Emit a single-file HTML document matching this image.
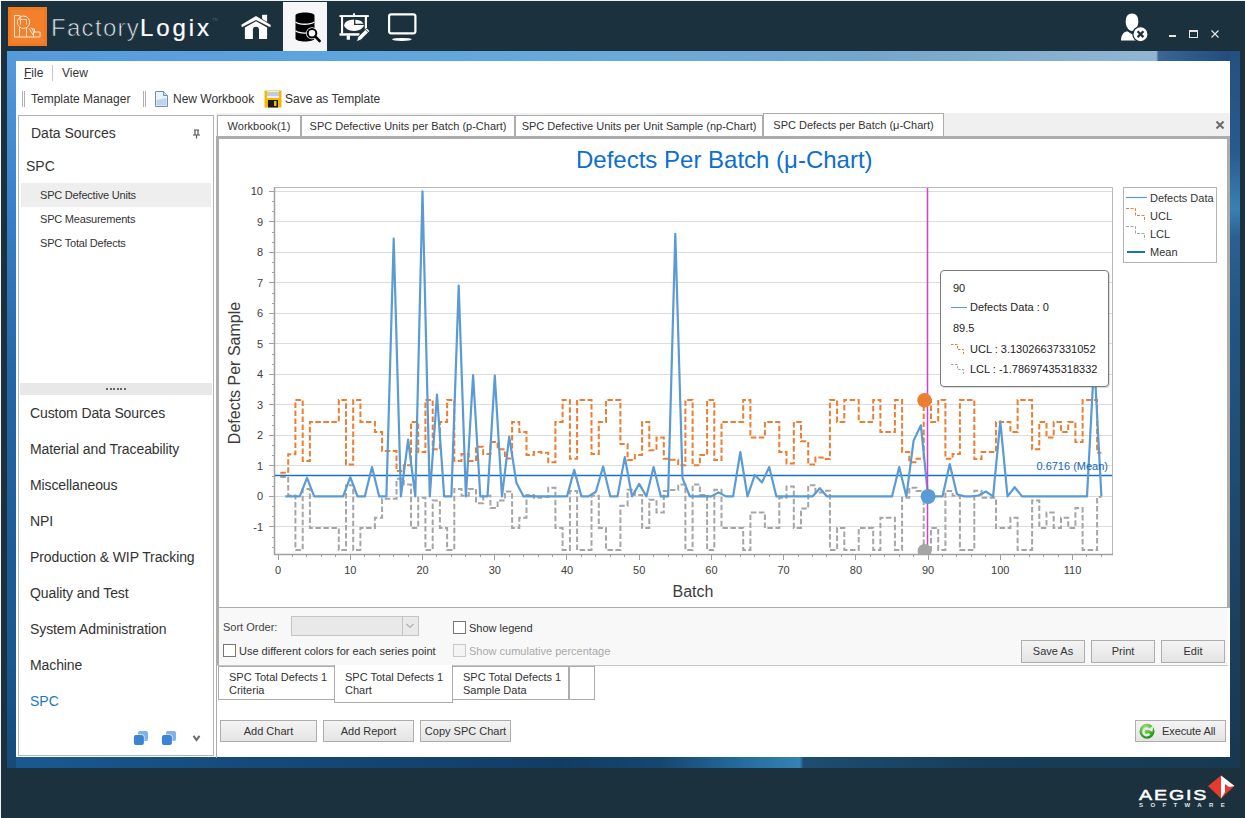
<!DOCTYPE html>
<html><head><meta charset="utf-8"><style>
html,body{margin:0;padding:0;}
body{width:1245px;height:818px;overflow:hidden;position:relative;background:#1b313e;font-family:'Liberation Sans',sans-serif;}
div{font-family:'Liberation Sans',sans-serif;}
</style></head><body>
<div style="position:absolute;left:0;top:0;width:1245px;height:1px;background:#f2f2f2"></div><div style="position:absolute;left:0;top:0;width:1px;height:818px;background:#f2f2f2"></div><div style="position:absolute;left:8px;top:7px;width:39px;height:39px;background:#ef7a1f"></div>
<div style="position:absolute;left:11px;top:10px;width:33px;height:33px;background:#f2802c"></div>
<svg style="position:absolute;left:8px;top:7px" width="39" height="39" viewBox="0 0 39 39">
 <g fill="none" stroke="#fde6d4" stroke-width="1">
  <path d="M12 13 V8.5 H6.5 V30 H32 V25 H25.5 V30"/>
  <path d="M11.5 20 V30 M18.5 21 V30"/>
  <circle cx="15.5" cy="15.2" r="6.2"/>
  <path d="M12.5 17.5 V12.5 H18.5 V17.5" stroke-width="0.9"/>
  <path d="M21 21.5 L25.5 28.5 M23 20.5 L26.5 26 V22 H24"/>
 </g>
</svg><div style="position:absolute;left:51px;top:16px;font-size:24px;color:#e6eaee;letter-spacing:1.3px;line-height:1;-webkit-text-stroke:0.7px #1b313e;transform:scaleX(1.0)">Factory</div><div style="position:absolute;left:140px;top:16px;font-size:24px;color:#ffffff;letter-spacing:2.9px;line-height:1;-webkit-text-stroke:0.2px #fff">Logix</div><div style="position:absolute;left:212px;top:18px;font-size:4px;color:#55636e;line-height:1">TM</div><div style="position:absolute;left:283px;top:2px;width:44px;height:49px;background:#f6f6f8"></div><svg style="position:absolute;left:235px;top:8px" width="45" height="37" viewBox="0 0 45 37">
 <rect x="27.1" y="6.8" width="5" height="7" fill="#fff"/>
 <path d="M5.3 16.8 L21 7.1 L36.8 17.1 L36.3 20.2 L21 11 L5.8 20.2 Z" fill="#1b313e"/>
 <path d="M6.3 16.8 L21 8.1 L35.8 17.1 L35.3 19.2 L21 12.0 L6.8 19.2 Z" fill="#fff"/>
 <path d="M9.9 19.4 L21 13.3 L32.1 19.4 V31 H24 V21.9 A3.05 3.05 0 0 0 17.9 21.9 V31 H9.9 Z" fill="#fff"/>
</svg><svg style="position:absolute;left:294px;top:11px" width="29" height="33" viewBox="0 0 29 33">
 <path d="M1.5 4.5 C1.5 0.5 20.5 0.5 20.5 4.5 V27.5 C20.5 31.5 1.5 31.5 1.5 27.5 Z" fill="#000"/>
 <path d="M1.5 11 C5 14 16 14 20.5 11 M1.5 19.8 C5 22.8 16 22.8 20.5 19.8" fill="none" stroke="#f6f6f8" stroke-width="1.3"/>
 <circle cx="18" cy="22.2" r="6" fill="#f6f6f8"/>
 <circle cx="18" cy="22.2" r="4.3" fill="none" stroke="#000" stroke-width="2"/>
 <path d="M21.2 25.4 L25.6 30" stroke="#000" stroke-width="2.6" stroke-linecap="round"/>
</svg><svg style="position:absolute;left:333px;top:5px" width="90" height="45" viewBox="0 0 90 45">
 <g fill="#fff">
  <rect x="6.5" y="10.1" width="29.3" height="1.9"/>
  <rect x="20" y="8.3" width="2" height="2"/>
  <rect x="8" y="11.9" width="2.1" height="16.5"/>
  <rect x="31.8" y="11.9" width="2.2" height="16.5"/>
  <rect x="6.5" y="28.2" width="20" height="2.5"/>
  <rect x="13.7" y="30.5" width="3.3" height="4.2"/>
  <ellipse cx="21" cy="20.2" rx="9.8" ry="5.8"/>
 </g>
 <path d="M21.7 14 V19.3 H31" fill="none" stroke="#1b313e" stroke-width="1.3"/>
 <path d="M23.5 36.8 L24.8 32 L33.8 23 L36.8 26 L27.8 35 Z" fill="#fff" stroke="#1b313e" stroke-width="0.9"/>
 <path d="M32.3 24.5 L35.3 27.5" stroke="#1b313e" stroke-width="0.7"/>
 <rect x="56.1" y="9.4" width="26.3" height="18.9" rx="2" fill="none" stroke="#fff" stroke-width="2.2"/>
 <ellipse cx="68.9" cy="34.4" rx="9.8" ry="1.5" fill="#fff"/>
</svg><svg style="position:absolute;left:1115px;top:8px" width="40" height="38" viewBox="0 0 40 38">
 <path d="M17 5.6 C21 5.6 23.3 8.5 23.3 13.5 C23.3 19 20 23 17 23 C14 23 10.7 19 10.7 13.5 C10.7 8.5 13 5.6 17 5.6 Z" fill="#fff"/>
 <path d="M6 32.5 C6 27 8.5 24 12.2 23.2 L17 26.2 L20.5 24 L21 32.5 Z" fill="#fff"/>
 <circle cx="25.5" cy="26.2" r="7.6" fill="#fff" stroke="#1b313e" stroke-width="1.3"/>
 <path d="M22.6 23.3 L28.4 29.1 M28.4 23.3 L22.6 29.1" stroke="#1b313e" stroke-width="2.3"/>
</svg><div style="position:absolute;left:1169px;top:35px;width:7px;height:2px;background:#e8e4e0"></div><div style="position:absolute;left:1189px;top:30px;width:7px;height:5px;border:1px solid #e8e4e0;border-top-width:2px"></div><svg style="position:absolute;left:1210px;top:29px" width="10" height="10"><path d="M1.5 1.5 L8.5 8.5 M8.5 1.5 L1.5 8.5" stroke="#e8e4e0" stroke-width="1.2"/></svg><div style="position:absolute;left:7px;top:51px;width:1233px;height:717px;
 background:
  linear-gradient(100deg, rgba(255,255,255,0) 0%, rgba(255,255,255,0) 88%, rgba(20,50,90,0.0) 88%),
  linear-gradient(180deg, #4f93d8 0%, #3f85cc 20%, #2c6fb0 45%, #1f5a93 70%, #174a78 100%)"></div><div style="position:absolute;left:7px;top:51px;width:1233px;height:10px;
 background:linear-gradient(90deg,#559bdc 0%,#5ea6dd 30%,#6aaad8 50%,#74a6cc 70%,#86b0d0 85%,#90b6d2 93.2%,#3a6694 93.4%,#2a5686 97%,#1e4a7b 100%)"></div><div style="position:absolute;left:1230px;top:51px;width:10px;height:717px;
 background:linear-gradient(180deg,#24507f 0%,#285a8c 14%,#3a80b4 22%,#2a6090 26%,#235482 38%,#21507a 50%,#1c4263 75%,#183750 100%)"></div><div style="position:absolute;left:7px;top:757px;width:1233px;height:11px;
 background:linear-gradient(90deg,#1a5a92 0%,#144a7a 20%,#123d63 45%,#15476e 53%,#24689a 59%,#3383b3 64.3%,#1d4d70 64.6%,#163d5a 80%,#173a52 100%)"></div><div style="position:absolute;left:7px;top:51px;width:9px;height:717px;
 background:linear-gradient(180deg,#559bdc 0%,#3b82cc 20%,#2467a8 45%,#1d5c98 70%,#1a5890 85%,#164a78 100%)"></div><div style="position:absolute;left:16px;top:61px;width:1214px;height:696px;background:#fff"></div><div style="position:absolute;left:24px;top:67px;font-size:12px;color:#333;white-space:nowrap;line-height:1;"><u>F</u>ile</div><div style="position:absolute;left:52px;top:65px;width:1px;height:16px;background:#c8c8c8"></div><div style="position:absolute;left:62px;top:67px;font-size:12px;color:#333;white-space:nowrap;line-height:1;">View</div><div style="position:absolute;left:22px;top:91px;width:1px;height:16px;background:#b0b0b0"></div><div style="position:absolute;left:24px;top:91px;width:1px;height:16px;background:#b0b0b0"></div><div style="position:absolute;left:31px;top:93px;font-size:12px;color:#333;white-space:nowrap;line-height:1;">Template Manager</div><div style="position:absolute;left:143px;top:91px;width:1px;height:16px;background:#b0b0b0"></div><div style="position:absolute;left:145px;top:91px;width:1px;height:16px;background:#b0b0b0"></div><svg style="position:absolute;left:154px;top:90px" width="15" height="18" viewBox="0 0 15 18">
 <path d="M1.5 1.5 H9.5 L13.5 5.5 V16.5 H1.5 Z" fill="#eaf2fb" stroke="#6f8fb5" stroke-width="1"/>
 <path d="M9.5 1.5 V5.5 H13.5" fill="#cfe0f3" stroke="#6f8fb5" stroke-width="1"/>
 <path d="M2.5 10 L12.5 8 V15.5 H2.5 Z" fill="#bcd4ee"/>
</svg><div style="position:absolute;left:173px;top:93px;font-size:12px;color:#333;white-space:nowrap;line-height:1;">New Workbook</div><svg style="position:absolute;left:264px;top:90px" width="18" height="18" viewBox="0 0 18 18">
 <rect x="0.5" y="0.5" width="17" height="17" fill="#f5b800"/>
 <rect x="3" y="1" width="12" height="7" fill="#e8eef4"/>
 <rect x="3" y="2.5" width="12" height="1" fill="#9ab"/>
 <rect x="3" y="4.5" width="12" height="1" fill="#9ab"/>
 <rect x="4" y="10" width="10" height="7.5" fill="#1a1a1a"/>
 <rect x="10" y="11" width="2.5" height="5" fill="#f5b800"/>
</svg><div style="position:absolute;left:285px;top:93px;font-size:12px;color:#333;white-space:nowrap;line-height:1;">Save as Template</div><div style="position:absolute;left:18px;top:115px;width:196px;height:641px;border:1px solid #b4b4b4;box-sizing:border-box;background:#fff"></div><div style="position:absolute;left:31px;top:126px;font-size:14px;color:#333;white-space:nowrap;line-height:1;">Data Sources</div><svg style="position:absolute;left:192px;top:129px" width="9" height="10" viewBox="0 0 9 10"><path d="M2 1 H7 M3 1 V6 M6 1 V6 M1 6 H8 M4.5 6 V9.5" stroke="#555" stroke-width="1.2" fill="none"/></svg><div style="position:absolute;left:26px;top:159px;font-size:14px;color:#333;white-space:nowrap;line-height:1;">SPC</div><div style="position:absolute;left:21px;top:183px;width:190px;height:24px;background:#eeeeee"></div><div style="position:absolute;left:40px;top:190px;font-size:11px;color:#333;white-space:nowrap;line-height:1;letter-spacing:-0.2px">SPC Defective Units</div><div style="position:absolute;left:40px;top:214px;font-size:11px;color:#333;white-space:nowrap;line-height:1;letter-spacing:-0.2px">SPC Measurements</div><div style="position:absolute;left:40px;top:238px;font-size:11px;color:#333;white-space:nowrap;line-height:1;letter-spacing:-0.2px">SPC Total Defects</div><div style="position:absolute;left:20px;top:383px;width:192px;height:12px;background:#e8e8e8"></div><div style="position:absolute;left:106.0px;top:388px;width:2px;height:2px;background:#666"></div><div style="position:absolute;left:109.6px;top:388px;width:2px;height:2px;background:#666"></div><div style="position:absolute;left:113.2px;top:388px;width:2px;height:2px;background:#666"></div><div style="position:absolute;left:116.8px;top:388px;width:2px;height:2px;background:#666"></div><div style="position:absolute;left:120.4px;top:388px;width:2px;height:2px;background:#666"></div><div style="position:absolute;left:124.0px;top:388px;width:2px;height:2px;background:#666"></div><div style="position:absolute;left:30px;top:406px;font-size:14px;color:#333;white-space:nowrap;line-height:1;letter-spacing:-0.1px">Custom Data Sources</div><div style="position:absolute;left:30px;top:442px;font-size:14px;color:#333;white-space:nowrap;line-height:1;letter-spacing:-0.1px">Material and Traceability</div><div style="position:absolute;left:30px;top:478px;font-size:14px;color:#333;white-space:nowrap;line-height:1;letter-spacing:-0.1px">Miscellaneous</div><div style="position:absolute;left:30px;top:514px;font-size:14px;color:#333;white-space:nowrap;line-height:1;letter-spacing:-0.1px">NPI</div><div style="position:absolute;left:30px;top:550px;font-size:14px;color:#333;white-space:nowrap;line-height:1;letter-spacing:-0.1px">Production &amp; WIP Tracking</div><div style="position:absolute;left:30px;top:586px;font-size:14px;color:#333;white-space:nowrap;line-height:1;letter-spacing:-0.1px">Quality and Test</div><div style="position:absolute;left:30px;top:622px;font-size:14px;color:#333;white-space:nowrap;line-height:1;letter-spacing:-0.1px">System Administration</div><div style="position:absolute;left:30px;top:658px;font-size:14px;color:#333;white-space:nowrap;line-height:1;letter-spacing:-0.1px">Machine</div><div style="position:absolute;left:30px;top:694px;font-size:14px;color:#1c7ac8;white-space:nowrap;line-height:1;">SPC</div><svg style="position:absolute;left:133px;top:730px" width="16" height="16" viewBox="0 0 16 16">
 <rect x="5" y="0.9" width="10" height="10" rx="2" fill="#7fb3e8"/>
 <rect x="0.4" y="4.5" width="11" height="11" rx="2" fill="#fff"/>
 <rect x="0.9" y="5" width="10" height="10" rx="2" fill="#3d84d0"/>
</svg><svg style="position:absolute;left:161px;top:730px" width="16" height="16" viewBox="0 0 16 16">
 <rect x="5" y="0.9" width="10" height="10" rx="2" fill="#7fb3e8"/>
 <rect x="0.4" y="4.5" width="11" height="11" rx="2" fill="#fff"/>
 <rect x="0.9" y="5" width="10" height="10" rx="2" fill="#3d84d0"/>
</svg><svg style="position:absolute;left:192px;top:734px" width="10" height="9"><path d="M1.5 1.8 L4.5 6 L7.5 1.8" stroke="#6a6a6a" stroke-width="2" fill="none"/></svg><div style="position:absolute;left:216px;top:113px;width:1014px;height:23px;background:#f0f0f0"></div><div style="position:absolute;left:217px;top:115px;width:84px;height:22px;border:1px solid #acacac;border-bottom:none;box-sizing:border-box;background:#fff;font-size:11px;color:#333;text-align:center;line-height:20px;white-space:nowrap">Workbook(1)</div><div style="position:absolute;left:301px;top:115px;width:214px;height:22px;border:1px solid #acacac;border-bottom:none;box-sizing:border-box;background:#fff;font-size:11px;color:#333;text-align:center;line-height:20px;white-space:nowrap">SPC Defective Units per Batch (p-Chart)</div><div style="position:absolute;left:515px;top:115px;width:248px;height:22px;border:1px solid #acacac;border-bottom:none;box-sizing:border-box;background:#fff;font-size:11px;color:#333;text-align:center;line-height:20px;white-space:nowrap">SPC Defective Units per Unit Sample (np-Chart)</div><div style="position:absolute;left:763px;top:113px;width:181px;height:24px;border:1px solid #acacac;border-bottom:none;box-sizing:border-box;background:#fff;font-size:11px;color:#333;text-align:center;line-height:22px;white-space:nowrap">SPC Defects per Batch (μ-Chart)</div><svg style="position:absolute;left:1214px;top:119px" width="12" height="12"><path d="M2.5 2.5 L9.5 9.5 M9.5 2.5 L2.5 9.5" stroke="#6a6a6a" stroke-width="2"/></svg><div style="position:absolute;left:216px;top:136px;width:1014px;height:472px;border-left:3px solid #acacac;border-top:3px solid #acacac;border-right:3px solid #acacac;border-bottom:1px solid #acacac;box-sizing:border-box;background:#fff"></div><div style="position:absolute;left:576px;top:148px;font-size:24px;color:#0d6fcc;white-space:nowrap;line-height:1">Defects Per Batch (μ-Chart)</div><svg width="1245" height="818" style="position:absolute;left:0;top:0">
<line x1="275" y1="526.5" x2="1112" y2="526.5" stroke="#dcdcdc" stroke-width="1"/>
<line x1="275" y1="496.5" x2="1112" y2="496.5" stroke="#dcdcdc" stroke-width="1"/>
<line x1="275" y1="465.5" x2="1112" y2="465.5" stroke="#dcdcdc" stroke-width="1"/>
<line x1="275" y1="435.5" x2="1112" y2="435.5" stroke="#dcdcdc" stroke-width="1"/>
<line x1="275" y1="404.5" x2="1112" y2="404.5" stroke="#dcdcdc" stroke-width="1"/>
<line x1="275" y1="374.5" x2="1112" y2="374.5" stroke="#dcdcdc" stroke-width="1"/>
<line x1="275" y1="343.5" x2="1112" y2="343.5" stroke="#dcdcdc" stroke-width="1"/>
<line x1="275" y1="313.5" x2="1112" y2="313.5" stroke="#dcdcdc" stroke-width="1"/>
<line x1="275" y1="282.5" x2="1112" y2="282.5" stroke="#dcdcdc" stroke-width="1"/>
<line x1="275" y1="252.5" x2="1112" y2="252.5" stroke="#dcdcdc" stroke-width="1"/>
<line x1="275" y1="221.5" x2="1112" y2="221.5" stroke="#dcdcdc" stroke-width="1"/>
<line x1="275" y1="191.5" x2="1112" y2="191.5" stroke="#dcdcdc" stroke-width="1"/>
<line x1="274.5" y1="187.5" x2="1112.5" y2="187.5" stroke="#b9b9b9"/>
<line x1="1112.5" y1="187.5" x2="1112.5" y2="554.5" stroke="#b9b9b9"/>
<line x1="274.5" y1="187" x2="274.5" y2="555" stroke="#a0a0a0" stroke-width="1.5"/>
<line x1="274" y1="554.5" x2="1113" y2="554.5" stroke="#a0a0a0" stroke-width="1.5"/>
<line x1="272" y1="547.5" x2="275" y2="547.5" stroke="#a0a0a0"/>
<line x1="272" y1="537.5" x2="275" y2="537.5" stroke="#a0a0a0"/>
<line x1="269" y1="526.5" x2="275" y2="526.5" stroke="#a0a0a0"/>
<line x1="272" y1="516.5" x2="275" y2="516.5" stroke="#a0a0a0"/>
<line x1="272" y1="506.5" x2="275" y2="506.5" stroke="#a0a0a0"/>
<line x1="269" y1="496.5" x2="275" y2="496.5" stroke="#a0a0a0"/>
<line x1="272" y1="486.5" x2="275" y2="486.5" stroke="#a0a0a0"/>
<line x1="272" y1="476.5" x2="275" y2="476.5" stroke="#a0a0a0"/>
<line x1="269" y1="465.5" x2="275" y2="465.5" stroke="#a0a0a0"/>
<line x1="272" y1="455.5" x2="275" y2="455.5" stroke="#a0a0a0"/>
<line x1="272" y1="445.5" x2="275" y2="445.5" stroke="#a0a0a0"/>
<line x1="269" y1="435.5" x2="275" y2="435.5" stroke="#a0a0a0"/>
<line x1="272" y1="425.5" x2="275" y2="425.5" stroke="#a0a0a0"/>
<line x1="272" y1="415.5" x2="275" y2="415.5" stroke="#a0a0a0"/>
<line x1="269" y1="404.5" x2="275" y2="404.5" stroke="#a0a0a0"/>
<line x1="272" y1="394.5" x2="275" y2="394.5" stroke="#a0a0a0"/>
<line x1="272" y1="384.5" x2="275" y2="384.5" stroke="#a0a0a0"/>
<line x1="269" y1="374.5" x2="275" y2="374.5" stroke="#a0a0a0"/>
<line x1="272" y1="364.5" x2="275" y2="364.5" stroke="#a0a0a0"/>
<line x1="272" y1="354.5" x2="275" y2="354.5" stroke="#a0a0a0"/>
<line x1="269" y1="343.5" x2="275" y2="343.5" stroke="#a0a0a0"/>
<line x1="272" y1="333.5" x2="275" y2="333.5" stroke="#a0a0a0"/>
<line x1="272" y1="323.5" x2="275" y2="323.5" stroke="#a0a0a0"/>
<line x1="269" y1="313.5" x2="275" y2="313.5" stroke="#a0a0a0"/>
<line x1="272" y1="303.5" x2="275" y2="303.5" stroke="#a0a0a0"/>
<line x1="272" y1="293.5" x2="275" y2="293.5" stroke="#a0a0a0"/>
<line x1="269" y1="282.5" x2="275" y2="282.5" stroke="#a0a0a0"/>
<line x1="272" y1="272.5" x2="275" y2="272.5" stroke="#a0a0a0"/>
<line x1="272" y1="262.5" x2="275" y2="262.5" stroke="#a0a0a0"/>
<line x1="269" y1="252.5" x2="275" y2="252.5" stroke="#a0a0a0"/>
<line x1="272" y1="242.5" x2="275" y2="242.5" stroke="#a0a0a0"/>
<line x1="272" y1="232.5" x2="275" y2="232.5" stroke="#a0a0a0"/>
<line x1="269" y1="221.5" x2="275" y2="221.5" stroke="#a0a0a0"/>
<line x1="272" y1="211.5" x2="275" y2="211.5" stroke="#a0a0a0"/>
<line x1="272" y1="201.5" x2="275" y2="201.5" stroke="#a0a0a0"/>
<line x1="269" y1="191.5" x2="275" y2="191.5" stroke="#a0a0a0"/>
<line x1="278.5" y1="554" x2="278.5" y2="560" stroke="#a0a0a0"/>
<line x1="292.5" y1="554" x2="292.5" y2="557" stroke="#a0a0a0"/>
<line x1="306.5" y1="554" x2="306.5" y2="557" stroke="#a0a0a0"/>
<line x1="321.5" y1="554" x2="321.5" y2="557" stroke="#a0a0a0"/>
<line x1="335.5" y1="554" x2="335.5" y2="557" stroke="#a0a0a0"/>
<line x1="350.5" y1="554" x2="350.5" y2="560" stroke="#a0a0a0"/>
<line x1="364.5" y1="554" x2="364.5" y2="557" stroke="#a0a0a0"/>
<line x1="379.5" y1="554" x2="379.5" y2="557" stroke="#a0a0a0"/>
<line x1="393.5" y1="554" x2="393.5" y2="557" stroke="#a0a0a0"/>
<line x1="408.5" y1="554" x2="408.5" y2="557" stroke="#a0a0a0"/>
<line x1="422.5" y1="554" x2="422.5" y2="560" stroke="#a0a0a0"/>
<line x1="436.5" y1="554" x2="436.5" y2="557" stroke="#a0a0a0"/>
<line x1="451.5" y1="554" x2="451.5" y2="557" stroke="#a0a0a0"/>
<line x1="465.5" y1="554" x2="465.5" y2="557" stroke="#a0a0a0"/>
<line x1="480.5" y1="554" x2="480.5" y2="557" stroke="#a0a0a0"/>
<line x1="494.5" y1="554" x2="494.5" y2="560" stroke="#a0a0a0"/>
<line x1="509.5" y1="554" x2="509.5" y2="557" stroke="#a0a0a0"/>
<line x1="523.5" y1="554" x2="523.5" y2="557" stroke="#a0a0a0"/>
<line x1="538.5" y1="554" x2="538.5" y2="557" stroke="#a0a0a0"/>
<line x1="552.5" y1="554" x2="552.5" y2="557" stroke="#a0a0a0"/>
<line x1="566.5" y1="554" x2="566.5" y2="560" stroke="#a0a0a0"/>
<line x1="581.5" y1="554" x2="581.5" y2="557" stroke="#a0a0a0"/>
<line x1="595.5" y1="554" x2="595.5" y2="557" stroke="#a0a0a0"/>
<line x1="610.5" y1="554" x2="610.5" y2="557" stroke="#a0a0a0"/>
<line x1="624.5" y1="554" x2="624.5" y2="557" stroke="#a0a0a0"/>
<line x1="639.5" y1="554" x2="639.5" y2="560" stroke="#a0a0a0"/>
<line x1="653.5" y1="554" x2="653.5" y2="557" stroke="#a0a0a0"/>
<line x1="668.5" y1="554" x2="668.5" y2="557" stroke="#a0a0a0"/>
<line x1="682.5" y1="554" x2="682.5" y2="557" stroke="#a0a0a0"/>
<line x1="696.5" y1="554" x2="696.5" y2="557" stroke="#a0a0a0"/>
<line x1="711.5" y1="554" x2="711.5" y2="560" stroke="#a0a0a0"/>
<line x1="725.5" y1="554" x2="725.5" y2="557" stroke="#a0a0a0"/>
<line x1="740.5" y1="554" x2="740.5" y2="557" stroke="#a0a0a0"/>
<line x1="754.5" y1="554" x2="754.5" y2="557" stroke="#a0a0a0"/>
<line x1="769.5" y1="554" x2="769.5" y2="557" stroke="#a0a0a0"/>
<line x1="783.5" y1="554" x2="783.5" y2="560" stroke="#a0a0a0"/>
<line x1="798.5" y1="554" x2="798.5" y2="557" stroke="#a0a0a0"/>
<line x1="812.5" y1="554" x2="812.5" y2="557" stroke="#a0a0a0"/>
<line x1="826.5" y1="554" x2="826.5" y2="557" stroke="#a0a0a0"/>
<line x1="841.5" y1="554" x2="841.5" y2="557" stroke="#a0a0a0"/>
<line x1="855.5" y1="554" x2="855.5" y2="560" stroke="#a0a0a0"/>
<line x1="870.5" y1="554" x2="870.5" y2="557" stroke="#a0a0a0"/>
<line x1="884.5" y1="554" x2="884.5" y2="557" stroke="#a0a0a0"/>
<line x1="899.5" y1="554" x2="899.5" y2="557" stroke="#a0a0a0"/>
<line x1="913.5" y1="554" x2="913.5" y2="557" stroke="#a0a0a0"/>
<line x1="928.5" y1="554" x2="928.5" y2="560" stroke="#a0a0a0"/>
<line x1="942.5" y1="554" x2="942.5" y2="557" stroke="#a0a0a0"/>
<line x1="956.5" y1="554" x2="956.5" y2="557" stroke="#a0a0a0"/>
<line x1="971.5" y1="554" x2="971.5" y2="557" stroke="#a0a0a0"/>
<line x1="985.5" y1="554" x2="985.5" y2="557" stroke="#a0a0a0"/>
<line x1="1000.5" y1="554" x2="1000.5" y2="560" stroke="#a0a0a0"/>
<line x1="1014.5" y1="554" x2="1014.5" y2="557" stroke="#a0a0a0"/>
<line x1="1029.5" y1="554" x2="1029.5" y2="557" stroke="#a0a0a0"/>
<line x1="1043.5" y1="554" x2="1043.5" y2="557" stroke="#a0a0a0"/>
<line x1="1058.5" y1="554" x2="1058.5" y2="557" stroke="#a0a0a0"/>
<line x1="1072.5" y1="554" x2="1072.5" y2="560" stroke="#a0a0a0"/>
<line x1="1086.5" y1="554" x2="1086.5" y2="557" stroke="#a0a0a0"/>
<line x1="1101.5" y1="554" x2="1101.5" y2="557" stroke="#a0a0a0"/>
<text x="263" y="530.5" text-anchor="end" font-family="Liberation Sans" font-size="11" fill="#3c3c3c">-1</text>
<text x="263" y="500.0" text-anchor="end" font-family="Liberation Sans" font-size="11" fill="#3c3c3c">0</text>
<text x="263" y="469.5" text-anchor="end" font-family="Liberation Sans" font-size="11" fill="#3c3c3c">1</text>
<text x="263" y="439.0" text-anchor="end" font-family="Liberation Sans" font-size="11" fill="#3c3c3c">2</text>
<text x="263" y="408.5" text-anchor="end" font-family="Liberation Sans" font-size="11" fill="#3c3c3c">3</text>
<text x="263" y="378.0" text-anchor="end" font-family="Liberation Sans" font-size="11" fill="#3c3c3c">4</text>
<text x="263" y="347.5" text-anchor="end" font-family="Liberation Sans" font-size="11" fill="#3c3c3c">5</text>
<text x="263" y="317.0" text-anchor="end" font-family="Liberation Sans" font-size="11" fill="#3c3c3c">6</text>
<text x="263" y="286.5" text-anchor="end" font-family="Liberation Sans" font-size="11" fill="#3c3c3c">7</text>
<text x="263" y="256.0" text-anchor="end" font-family="Liberation Sans" font-size="11" fill="#3c3c3c">8</text>
<text x="263" y="225.5" text-anchor="end" font-family="Liberation Sans" font-size="11" fill="#3c3c3c">9</text>
<text x="263" y="195.0" text-anchor="end" font-family="Liberation Sans" font-size="11" fill="#3c3c3c">10</text>
<text x="278.1" y="574" text-anchor="middle" font-family="Liberation Sans" font-size="11" fill="#3c3c3c">0</text>
<text x="350.3" y="574" text-anchor="middle" font-family="Liberation Sans" font-size="11" fill="#3c3c3c">10</text>
<text x="422.5" y="574" text-anchor="middle" font-family="Liberation Sans" font-size="11" fill="#3c3c3c">20</text>
<text x="494.8" y="574" text-anchor="middle" font-family="Liberation Sans" font-size="11" fill="#3c3c3c">30</text>
<text x="567.0" y="574" text-anchor="middle" font-family="Liberation Sans" font-size="11" fill="#3c3c3c">40</text>
<text x="639.2" y="574" text-anchor="middle" font-family="Liberation Sans" font-size="11" fill="#3c3c3c">50</text>
<text x="711.4" y="574" text-anchor="middle" font-family="Liberation Sans" font-size="11" fill="#3c3c3c">60</text>
<text x="783.6" y="574" text-anchor="middle" font-family="Liberation Sans" font-size="11" fill="#3c3c3c">70</text>
<text x="855.9" y="574" text-anchor="middle" font-family="Liberation Sans" font-size="11" fill="#3c3c3c">80</text>
<text x="928.1" y="574" text-anchor="middle" font-family="Liberation Sans" font-size="11" fill="#3c3c3c">90</text>
<text x="1000.3" y="574" text-anchor="middle" font-family="Liberation Sans" font-size="11" fill="#3c3c3c">100</text>
<text x="1072.5" y="574" text-anchor="middle" font-family="Liberation Sans" font-size="11" fill="#3c3c3c">110</text>
<defs><clipPath id="pc"><rect x="275" y="188" width="837" height="366"/></clipPath></defs>
<g clip-path="url(#pc)">
<path d="M280.3,477.0H288.2V495.5H295.4V549.9H302.7V488.9H309.9V527.9H317.1V527.9H324.3V527.9H331.5V527.9H338.8V549.9H346.0V485.2H353.2V549.9H360.4V527.9H367.7V527.9H374.9V517.8H382.1V498.7H389.3V498.7H396.5V478.8H403.8V484.6H411.0V527.9H418.2V497.8H425.4V549.9H432.7V500.6H439.9V527.9H447.1V549.9H454.3V488.9H461.5V495.8H468.8V488.9H476.0V503.2H483.2V495.8H490.4V507.9H497.6V500.6H504.9V491.4H512.1V527.9H519.3V517.8H526.5V494.9H533.8V497.8H541.0V497.1H548.2V487.7H555.4V527.9H562.6V549.9H569.9V491.1H577.1V549.9H584.3V549.9H591.5V495.8H598.8V527.9H606.0V549.9H613.2V549.9H620.4V505.7H627.6V489.8H634.9V494.9H642.1V527.9H649.3V499.7H656.5V512.4H663.8V491.1H671.0V490.1H678.2V484.6H685.4V549.9H692.6V484.6H699.9V494.9H707.1V549.9H714.3V489.8H721.5V527.9H728.8V527.9H736.0V527.9H743.2V549.9H750.4V512.4H757.6V512.4H764.9V527.9H772.1V527.9H779.3V497.8H786.5V486.5H793.8V527.9H801.0V508.6H808.2V485.2H815.4V492.4H822.6V490.8H829.9V549.9H837.1V527.9H844.3V549.9H851.5V549.9H858.7V527.9H866.0V527.9H873.2V549.9H880.4V517.8H887.6V517.8H894.9V549.9H902.1V497.8H909.3V487.7H916.5V491.1H923.7V549.9H931.0V527.9H938.2V549.9H945.4V491.1H952.6V495.8H959.9V549.9H967.1V549.9H974.3V490.8H981.5V497.8H988.7V497.8H996.0V527.9H1003.2V527.9H1010.4V517.8H1017.6V549.9H1024.9V549.9H1032.1V500.6H1039.3V527.9H1046.5V512.4H1053.7V527.9H1061.0V517.8H1068.2V527.9H1075.4V507.9H1082.6V549.9H1089.9V549.9H1097.1V497.1H1101.4" fill="none" stroke="#a5a5a5" stroke-width="2" stroke-dasharray="5.5,2.5"/>
<path d="M280.3,472.8H288.2V454.3H295.4V399.9H302.7V460.9H309.9V421.9H317.1V421.9H324.3V421.9H331.5V421.9H338.8V399.9H346.0V464.6H353.2V399.9H360.4V421.9H367.7V421.9H374.9V432.1H382.1V451.1H389.3V451.1H396.5V471.0H403.8V465.2H411.0V421.9H418.2V452.1H425.4V399.9H432.7V449.2H439.9V421.9H447.1V399.9H454.3V460.9H461.5V454.0H468.8V460.9H476.0V446.7H483.2V454.0H490.4V441.9H497.6V449.2H504.9V458.4H512.1V421.9H519.3V432.1H526.5V454.9H533.8V452.1H541.0V452.7H548.2V462.2H555.4V421.9H562.6V399.9H569.9V458.7H577.1V399.9H584.3V399.9H591.5V454.0H598.8V421.9H606.0V399.9H613.2V399.9H620.4V444.1H627.6V460.0H634.9V454.9H642.1V421.9H649.3V450.2H656.5V437.5H663.8V458.7H671.0V459.7H678.2V465.2H685.4V399.9H692.6V465.2H699.9V454.9H707.1V399.9H714.3V460.0H721.5V421.9H728.8V421.9H736.0V421.9H743.2V399.9H750.4V437.5H757.6V437.5H764.9V421.9H772.1V421.9H779.3V452.1H786.5V463.4H793.8V421.9H801.0V441.3H808.2V464.6H815.4V457.5H822.6V459.1H829.9V399.9H837.1V421.9H844.3V399.9H851.5V399.9H858.7V421.9H866.0V421.9H873.2V399.9H880.4V432.1H887.6V432.1H894.9V399.9H902.1V452.1H909.3V462.2H916.5V458.7H923.7V399.9H931.0V421.9H938.2V399.9H945.4V458.7H952.6V454.0H959.9V399.9H967.1V399.9H974.3V459.1H981.5V452.1H988.7V452.1H996.0V421.9H1003.2V421.9H1010.4V432.1H1017.6V399.9H1024.9V399.9H1032.1V449.2H1039.3V421.9H1046.5V437.5H1053.7V421.9H1061.0V432.1H1068.2V421.9H1075.4V441.9H1082.6V399.9H1089.9V399.9H1097.1V452.7H1101.4" fill="none" stroke="#ed7d31" stroke-width="2" stroke-dasharray="5.5,2.5"/>
<line x1="275" y1="475.5" x2="1112" y2="475.5" stroke="#1a6fc2" stroke-width="1.3"/>
<path d="M285.3,496.4 L292.5,496.4 L299.8,496.4 L307.0,477.8 L314.2,496.4 L321.4,496.4 L328.7,496.4 L335.9,496.4 L343.1,496.4 L350.3,477.2 L357.5,496.4 L364.8,496.4 L372.0,467.1 L379.2,496.4 L386.4,496.4 L393.7,238.7 L400.9,496.4 L408.1,439.7 L415.3,496.4 L422.5,191.4 L429.8,496.4 L437.0,394.5 L444.2,496.4 L451.4,496.4 L458.7,285.6 L465.9,496.4 L473.1,375.0 L480.3,496.4 L487.5,496.4 L494.8,375.6 L502.0,496.4 L509.2,436.6 L516.4,482.7 L523.6,496.4 L530.9,496.1 L538.1,496.4 L545.3,496.4 L552.5,496.4 L559.8,496.4 L567.0,496.4 L574.2,469.9 L581.4,496.4 L588.6,496.4 L595.9,491.8 L603.1,466.5 L610.3,496.4 L617.5,496.4 L624.8,457.1 L632.0,496.4 L639.2,483.9 L646.4,496.4 L653.6,467.1 L660.9,496.4 L668.1,496.4 L675.3,233.8 L682.5,478.1 L689.8,496.4 L697.0,496.4 L704.2,496.1 L711.4,496.4 L718.6,492.4 L725.9,496.4 L733.1,496.4 L740.3,452.2 L747.5,496.4 L754.8,475.0 L762.0,482.4 L769.2,467.1 L776.4,496.4 L783.6,496.4 L790.9,496.4 L798.1,496.4 L805.3,496.4 L812.5,496.4 L819.8,488.2 L827.0,496.4 L834.2,496.4 L841.4,496.4 L848.6,496.4 L855.9,496.4 L863.1,496.4 L870.3,496.4 L877.5,496.4 L884.7,496.4 L892.0,496.4 L899.2,467.1 L906.4,496.4 L913.6,440.6 L920.9,425.3 L928.1,496.4 L935.3,496.4 L942.5,496.4 L949.7,464.1 L957.0,494.3 L964.2,496.4 L971.4,496.4 L978.6,495.5 L985.9,491.5 L993.1,496.4 L1000.3,421.4 L1007.5,496.4 L1014.7,487.2 L1022.0,496.4 L1029.2,496.4 L1036.4,496.4 L1043.6,496.4 L1050.9,496.4 L1058.1,496.4 L1065.3,496.4 L1072.5,496.4 L1079.7,496.4 L1087.0,496.4 L1094.2,360.4 L1101.4,496.4" fill="none" stroke="#5b9bd5" stroke-width="2.2" stroke-linejoin="round"/>
<line x1="927.5" y1="188" x2="927.5" y2="554" stroke="#d23fd8" stroke-width="1.5"/>
<circle cx="924.5" cy="400.3" r="7.2" fill="#ed7d31"/>
<circle cx="924.5" cy="550.9" r="7" fill="#a5a5a5"/>
<circle cx="928.1" cy="496.4" r="7.5" fill="#5b9bd5"/>
</g>
<text x="1108" y="469.9" text-anchor="end" font-family="Liberation Sans" font-size="11" fill="#1366bc">0.6716 (Mean)</text>
<text x="693" y="597" text-anchor="middle" font-family="Liberation Sans" font-size="16" fill="#3c3c3c">Batch</text>
<text transform="translate(240,373) rotate(-90)" x="0" y="0" text-anchor="middle" font-family="Liberation Sans" font-size="16" fill="#3c3c3c">Defects Per Sample</text>
</svg><div style="position:absolute;left:1123px;top:187px;width:94px;height:76px;border:1px solid #b4b4b4;box-sizing:border-box;background:#fff"></div><svg style="position:absolute;left:1123px;top:187px" width="94" height="76"><line x1="3" y1="10.5" x2="24" y2="10.5" stroke="#5b9bd5" stroke-width="1.2"/><path d="M3 21.5 H12.5 V28.5 H21.5 V35" fill="none" stroke="#ed7d31" stroke-width="1" stroke-dasharray="3,1.5"/><path d="M3 39.5 H12.5 V46.5 H21.5 V53" fill="none" stroke="#a5a5a5" stroke-width="1" stroke-dasharray="3,1.5"/><line x1="4" y1="65" x2="22" y2="65" stroke="#1f6fc0" stroke-width="2"/></svg><div style="position:absolute;left:1150px;top:193px;font-size:11px;color:#333;white-space:nowrap;line-height:1;">Defects Data</div><div style="position:absolute;left:1150px;top:211px;font-size:11px;color:#333;white-space:nowrap;line-height:1;">UCL</div><div style="position:absolute;left:1150px;top:229px;font-size:11px;color:#333;white-space:nowrap;line-height:1;">LCL</div><div style="position:absolute;left:1150px;top:247px;font-size:11px;color:#333;white-space:nowrap;line-height:1;">Mean</div><div style="position:absolute;left:940px;top:270px;width:169px;height:117px;border:1px solid #7a7a7a;border-radius:4px;box-sizing:border-box;background:#fff;box-shadow:1px 1px 1px rgba(0,0,0,0.15)"></div><div style="position:absolute;left:953px;top:283px;font-size:11px;color:#222;white-space:nowrap;line-height:1;">90</div><div style="position:absolute;left:951px;top:307px;width:16px;height:1px;background:#5b9bd5"></div><div style="position:absolute;left:970px;top:302px;font-size:11px;color:#222;white-space:nowrap;line-height:1;">Defects Data : 0</div><div style="position:absolute;left:953px;top:323px;font-size:11px;color:#222;white-space:nowrap;line-height:1;">89.5</div><svg style="position:absolute;left:950px;top:343px" width="18" height="14"><path d="M1 1.5 H7.5 V6.5 H13.5 V11" fill="none" stroke="#ed7d31" stroke-width="1" stroke-dasharray="2.5,1.5"/></svg><div style="position:absolute;left:970px;top:344px;font-size:11px;color:#222;white-space:nowrap;line-height:1;">UCL : 3.13026637331052</div><svg style="position:absolute;left:950px;top:363px" width="18" height="14"><path d="M1 1.5 H7.5 V6.5 H13.5 V11" fill="none" stroke="#a5a5a5" stroke-width="1" stroke-dasharray="2.5,1.5"/></svg><div style="position:absolute;left:970px;top:364px;font-size:11px;color:#222;white-space:nowrap;line-height:1;">LCL : -1.78697435318332</div><div style="position:absolute;left:216px;top:608px;width:1012px;height:58px;background:#f8f8f8;border-left:3px solid #acacac;box-sizing:border-box"></div><div style="position:absolute;left:223px;top:622px;font-size:11px;color:#444;white-space:nowrap;line-height:1;">Sort Order:</div><div style="position:absolute;left:291px;top:616px;width:128px;height:20px;border:1px solid #c4c4c4;box-sizing:border-box;background:#e9e9e9"></div><div style="position:absolute;left:402px;top:617px;width:1px;height:18px;background:#c4c4c4"></div><svg style="position:absolute;left:405px;top:622px" width="10" height="8"><path d="M1.5 2 L5 5.5 L8.5 2" stroke="#b0b0b0" stroke-width="1.2" fill="none"/></svg><div style="position:absolute;left:453px;top:621px;width:13px;height:13px;border:1px solid #767676;box-sizing:border-box;background:#fff"></div><div style="position:absolute;left:469px;top:623px;font-size:11px;color:#333;white-space:nowrap;line-height:1;">Show legend</div><div style="position:absolute;left:223px;top:644px;width:13px;height:13px;border:1px solid #767676;box-sizing:border-box;background:#fff"></div><div style="position:absolute;left:239px;top:646px;font-size:11px;color:#333;white-space:nowrap;line-height:1;">Use different colors for each series point</div><div style="position:absolute;left:453px;top:644px;width:13px;height:13px;border:1px solid #c8c8c8;box-sizing:border-box;background:#f4f4f4"></div><div style="position:absolute;left:469px;top:646px;font-size:11px;color:#a8a8a8;white-space:nowrap;line-height:1;">Show cumulative percentage</div><div style="position:absolute;left:1021px;top:640px;width:64px;height:23px;border:1px solid #adadad;box-sizing:border-box;background:linear-gradient(#f4f4f4,#e4e4e4);font-size:11px;color:#333;text-align:center;line-height:21px">Save As</div><div style="position:absolute;left:1091px;top:640px;width:64px;height:23px;border:1px solid #adadad;box-sizing:border-box;background:linear-gradient(#f4f4f4,#e4e4e4);font-size:11px;color:#333;text-align:center;line-height:21px">Print</div><div style="position:absolute;left:1161px;top:640px;width:64px;height:23px;border:1px solid #adadad;box-sizing:border-box;background:linear-gradient(#f4f4f4,#e4e4e4);font-size:11px;color:#333;text-align:center;line-height:21px">Edit</div><div style="position:absolute;left:216px;top:665px;width:1012px;height:1px;background:#c8c8c8"></div><div style="position:absolute;left:216px;top:665px;width:1px;height:93px;background:#acacac"></div><div style="position:absolute;left:218px;top:666px;width:117px;height:34px;border:1px solid #acacac;box-sizing:border-box;background:#fff;font-size:11px;color:#333;line-height:13px;padding:4px 0 0 10px;white-space:nowrap">SPC Total Defects 1<br>Criteria</div><div style="position:absolute;left:452px;top:666px;width:117px;height:34px;border:1px solid #acacac;box-sizing:border-box;background:#fff;font-size:11px;color:#333;line-height:13px;padding:4px 0 0 10px;white-space:nowrap">SPC Total Defects 1<br>Sample Data</div><div style="position:absolute;left:569px;top:666px;width:26px;height:34px;border:1px solid #acacac;box-sizing:border-box;background:#fff;font-size:11px;color:#333;line-height:13px;padding:4px 0 0 10px;white-space:nowrap"></div><div style="position:absolute;left:334px;top:665px;width:119px;height:38px;border:1px solid #acacac;border-top:none;box-sizing:border-box;background:#fff;font-size:11px;color:#333;line-height:13px;padding:6px 0 0 10px;white-space:nowrap">SPC Total Defects 1<br>Chart</div><div style="position:absolute;left:220px;top:720px;width:97px;height:22px;border:1px solid #adadad;box-sizing:border-box;background:linear-gradient(#f4f4f4,#e4e4e4);font-size:11px;color:#333;text-align:center;line-height:20px">Add Chart</div><div style="position:absolute;left:323px;top:720px;width:91px;height:22px;border:1px solid #adadad;box-sizing:border-box;background:linear-gradient(#f4f4f4,#e4e4e4);font-size:11px;color:#333;text-align:center;line-height:20px">Add Report</div><div style="position:absolute;left:420px;top:720px;width:91px;height:22px;border:1px solid #adadad;box-sizing:border-box;background:linear-gradient(#f4f4f4,#e4e4e4);font-size:11px;color:#333;text-align:center;line-height:20px">Copy SPC Chart</div><div style="position:absolute;left:1135px;top:720px;width:91px;height:22px;border:1px solid #adadad;box-sizing:border-box;background:linear-gradient(#f4f4f4,#e4e4e4);font-size:11px;color:#333;line-height:20px;padding-left:26px;letter-spacing:-0.1px">Execute All</div>
<svg style="position:absolute;left:1139px;top:723px" width="18" height="17" viewBox="0 0 18 17">
 <defs><radialGradient id="eg" cx="40%" cy="25%" r="75%"><stop offset="0" stop-color="#a8e07a"/><stop offset="0.6" stop-color="#4cb52f"/><stop offset="1" stop-color="#1f8a18"/></radialGradient></defs>
 <circle cx="8" cy="8.3" r="7.5" fill="url(#eg)"/>
 <path d="M9.8 6.3 A3.3 3.3 0 1 0 10.4 10.7" fill="none" stroke="#e4ebe2" stroke-width="2.6"/>
 <path d="M8.6 6.4 L14.4 2.6 L13.4 8.8 Z" fill="#e4ebe2"/>
</svg><div style="position:absolute;left:1138.6px;top:786.5px;font-size:15px;color:#fff;letter-spacing:1.4px;line-height:1;-webkit-text-stroke:0.5px #fff;transform:scaleX(1.31);transform-origin:left top">AEGIS</div><div style="position:absolute;left:1139px;top:802px;font-size:6px;font-weight:bold;color:#e8e8e8;letter-spacing:7.4px;line-height:1">SOFTWARE</div><svg style="position:absolute;left:1208px;top:775px" width="28" height="24" viewBox="0 0 28 24">
 <path d="M13 0.5 L26.5 11 L13 23.5 L0 11 Z" fill="#e63a2e"/>
 <path d="M13 0.5 L26.5 11 L21 12 L17 9 V17 L13 23.5 Z" fill="#fff"/>
</svg>
</body></html>
